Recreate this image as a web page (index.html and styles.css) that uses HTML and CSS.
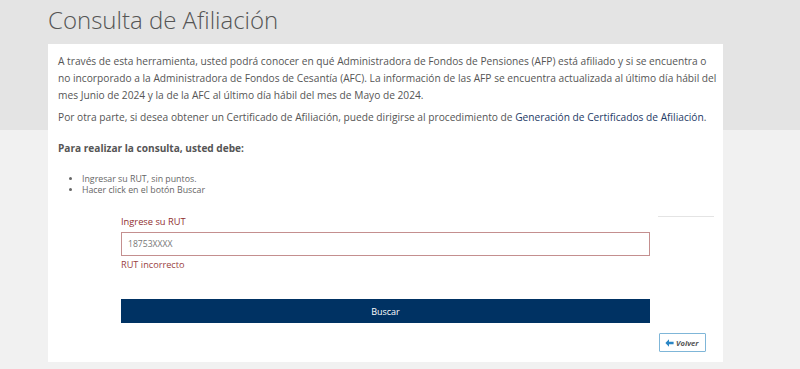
FILE: index.html
```html
<!DOCTYPE html>
<html lang="es">
<head>
<meta charset="utf-8">
<title>Consulta de Afiliación</title>
<link rel="stylesheet" href="styles.css">
</head>
<body>
<div class="page">
  <h1 class="title">Consulta de Afiliación</h1>
  <div class="card">
    <p class="intro">A través de esta herramienta, usted podrá conocer en qué Administradora de Fondos de Pensiones (AFP) está afiliado y si se encuentra o no incorporado a la Administradora de Fondos de Cesantía (AFC). La información de las AFP se encuentra actualizada al último día hábil del mes Junio de 2024 y la de la AFC al último día hábil del mes de Mayo de 2024.</p>
    <p class="intro second">Por otra parte, si desea obtener un Certificado de Afiliación, puede dirigirse al procedimiento de <a class="link" href="#">Generación de Certificados de Afiliación</a>.</p>
    <h2 class="subtitle">Para realizar la consulta, usted debe:</h2>
    <ul class="steps">
      <li>Ingresar su RUT, sin puntos.</li>
      <li>Hacer click en el botón Buscar</li>
    </ul>
    <div class="form-row">
      <div class="spacer"></div>
      <div class="form">
        <label class="label">Ingrese su RUT</label>
        <div class="input">18753XXXX</div>
        <div class="error">RUT incorrecto</div>
        <button class="search">Buscar</button>
      </div>
      <div class="side">
        <div class="side-line"></div>
      </div>
    </div>
    <div class="back-row">
      <button class="back"><svg width="9" height="8" viewBox="0 0 9 8"><path d="M4 0.2 L0.4 4 L4 7.8 L4 5.3 L8.6 5.3 L8.6 2.7 L4 2.7 Z" fill="#2a86c5"/></svg><span>Volver</span></button>
    </div>
  </div>
</div>
</body>
</html>
```
FILE: styles.css
```css
* { box-sizing: border-box; }
html, body { margin: 0; padding: 0; }
body {
  width: 800px;
  height: 369px;
  overflow: hidden;
  font-family: "Open Sans", "Liberation Sans", sans-serif;
  color: #555;
  background: linear-gradient(to bottom, #e4e4e4 0, #e4e4e4 130px, #f1f1f1 130px, #f1f1f1 100%);
}
.page {
  padding-left: 48px;
  width: 723px;
  box-sizing: content-box;
}
.title {
  margin: 0;
  height: 44px;
  padding-top: 5px;
  font-weight: 300;
  font-size: 24px;
  line-height: 30px;
  color: #555;
}
.card {
  background: #fff;
  width: 675px;
  height: 318px;
  padding: 9px 3px 0 10px;
}
.intro {
  margin: 0;
  font-size: 10.2px;
  line-height: 17px;
  color: #555;
}
.second { margin-top: 5px; }
.link { color: #1e3a66; text-decoration: none; }
.subtitle {
  margin: 14px 0 0 0;
  font-size: 10.1px;
  font-weight: 700;
  line-height: 17px;
  color: #555;
}
.steps {
  margin: 17px 0 0 0;
  padding-left: 24px;
  font-size: 8.8px;
  line-height: 11px;
  color: #666;
}
.form-row {
  display: flex;
  margin-top: 19px;
}
.spacer { width: 63px; flex: none; }
.form { width: 529px; flex: none; }
.label {
  display: block;
  font-size: 9.3px;
  line-height: 14px;
  color: #8f2f30;
  margin-bottom: 3px;
}
.input {
  height: 24px;
  border: 1px solid #c48f8f;
  padding-left: 6px;
  font-size: 8.6px;
  line-height: 22px;
  color: #777;
}
.error {
  font-size: 9.2px;
  line-height: 14px;
  margin-top: 2px;
  color: #9a3f3f;
}
.search {
  display: block;
  width: 529px;
  height: 24px;
  margin-top: 27px;
  border: 0;
  background: #003263;
  color: #fff;
  font-family: "Open Sans", "Liberation Sans", sans-serif;
  font-size: 9px;
  padding: 0;
}
.side {
  flex: none;
  width: 64px;
  padding-left: 8px;
}
.side-line {
  margin-top: 1px;
  height: 1px;
  background: #e4e4e4;
}
.back-row {
  padding-left: 601px;
  margin-top: 10px;
}
.back {
  width: 47px;
  height: 19px;
  border: 1px solid #7fb6d8;
  background: #fff;
  padding: 0 0 0 5px;
  display: flex;
  align-items: center;
  gap: 2px;
  font-family: "Open Sans", "Liberation Sans", sans-serif;
  font-size: 7.6px;
  font-style: italic;
  font-weight: 700;
  color: #555;
  border-radius: 1px;
}
```
